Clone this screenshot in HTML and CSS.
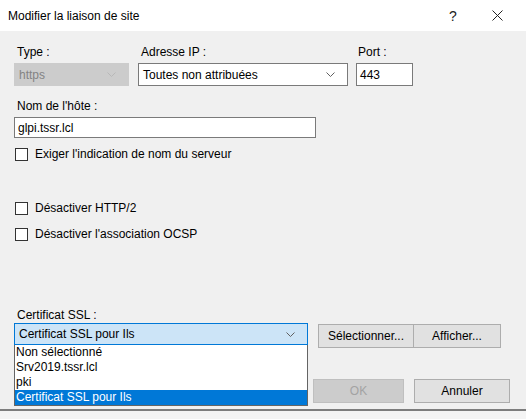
FILE: index.html
```html
<!DOCTYPE html>
<html lang="fr">
<head>
<meta charset="utf-8">
<title>Modifier la liaison de site</title>
<link rel="stylesheet" href="styles.css">
</head>
<body>
<div class="dialog">
  <div class="titlebar">
    <span class="title">Modifier la liaison de site</span>
    <span class="help">?</span>
    <span class="close">
      <svg width="11" height="11" viewBox="0 0 11 11"><path d="M0.5 0.5 L10.5 10.5 M10.5 0.5 L0.5 10.5" stroke="#222" stroke-width="1" fill="none"/></svg>
    </span>
  </div>
  <div class="content">
    <div class="row-top">
      <div class="field f-type">
        <label class="lbl">Type :</label>
        <div class="combo disabled"><span class="val">https</span><svg class="chev" width="9" height="5" viewBox="0 0 9 5"><path d="M0.5 0.5 L4.5 4.5 L8.5 0.5" stroke="#b8b8b8" fill="none"/></svg></div>
      </div>
      <div class="field f-ip">
        <label class="lbl">Adresse IP :</label>
        <div class="combo"><span class="val">Toutes non attribuées</span><svg class="chev" width="9" height="5" viewBox="0 0 9 5"><path d="M0.5 0.5 L4.5 4.5 L8.5 0.5" stroke="#606060" fill="none"/></svg></div>
      </div>
      <div class="field f-port">
        <label class="lbl">Port :</label>
        <div class="textbox port">443</div>
      </div>
    </div>

    <label class="lbl host-lbl">Nom de l'hôte :</label>
    <div class="textbox host">glpi.tssr.lcl</div>

    <div class="check c1"><span class="box"></span><span>Exiger l'indication de nom du serveur</span></div>
    <div class="check c2"><span class="box"></span><span>Désactiver HTTP/2</span></div>
    <div class="check c3"><span class="box"></span><span>Désactiver l'association OCSP</span></div>

    <label class="lbl cert-lbl">Certificat SSL :</label>
    <div class="cert-row">
      <div class="cert-wrap">
        <div class="combo focused"><span class="val">Certificat SSL pour Ils</span><svg class="chev" width="9" height="5" viewBox="0 0 9 5"><path d="M0.5 0.5 L4.5 4.5 L8.5 0.5" stroke="#606060" fill="none"/></svg></div>
        <ul class="dropdown">
          <li>Non sélectionné</li>
          <li>Srv2019.tssr.lcl</li>
          <li>pki</li>
          <li class="sel">Certificat SSL pour Ils</li>
        </ul>
      </div>
      <div class="btn b-sel">Sélectionner...</div>
      <div class="btn b-aff">Afficher...</div>
    </div>

    <div class="actions">
      <div class="btn b-ok disabled">OK</div>
      <div class="btn b-cancel">Annuler</div>
    </div>
  </div>
</div>
</body>
</html>
```

FILE: styles.css
```css
* { box-sizing: border-box; }
html, body {
  margin: 0;
  padding: 0;
}
body {
  width: 526px;
  height: 419px;
  overflow: hidden;
  background: #f4f4f4;
  font-family: "Liberation Sans", Arial, sans-serif;
  font-size: 12px;
  color: #000;
}
.dialog {
  height: 411px;
  display: flex;
  flex-direction: column;
  background: #f0f0f0;
  border-bottom: 2px solid #7d7d7d;
}
.titlebar {
  height: 31px;
  background: #fff;
  display: flex;
  align-items: center;
  padding-left: 8px;
}
.title {
  flex: 1;
  font-size: 12px;
  color: #000;
}
.help {
  width: 14px;
  font-size: 14px;
  margin-right: 29px;
  color: #222;
}
.close {
  width: 11px;
  height: 11px;
  margin-right: 23px;
  display: flex;
}
.content {
  flex: 1;
  padding: 13px 19px 0 14px;
  position: relative;
}
.lbl {
  display: block;
  line-height: 16px;
  height: 16px;
  padding-left: 3px;
}
.row-top {
  display: flex;
  gap: 9px;
}
.field .lbl { margin-bottom: 3px; }
.f-type { width: 115px; }
.f-ip { width: 210px; }
.f-port { width: 57px; margin-left: -1px; }
.f-port .lbl { padding-left: 2px; }

.combo {
  height: 23px;
  border: 1px solid #7a7a7a;
  background: #fff;
  display: flex;
  align-items: center;
  padding: 0 12px 0 4px;
}
.combo .val { flex: 1; white-space: nowrap; }
.combo.disabled {
  background: #cccccc;
  border-color: #cccccc;
  color: #838383;
}
.combo.focused {
  background: #cce4f7;
  border-color: #0078d7;
}
.textbox {
  height: 23px;
  border: 1px solid #7a7a7a;
  background: #fff;
  display: flex;
  align-items: center;
  padding-left: 3px;
}
.host-lbl { margin-top: 12px; }
.textbox.host {
  width: 302px;
  height: 21px;
  margin-top: 3px;
}
.check {
  display: flex;
  align-items: center;
  height: 16px;
  gap: 7px;
}
.check .box {
  width: 13px;
  height: 13px;
  border: 1px solid #333;
  background: #fff;
  margin-left: 1px;
}
.c1 { margin-top: 8px; }
.c2 { margin-top: 38px; }
.c3 { margin-top: 10px; }
.cert-lbl { margin-top: 65px; }
.cert-row {
  display: flex;
  align-items: flex-start;
}
.cert-wrap {
  width: 294px;
  position: relative;
  margin-right: 10px;
  z-index: 2;
}
.cert-wrap .combo { height: 22px; }
.dropdown {
  position: absolute;
  top: 22px;
  left: 0;
  width: 294px;
  margin: 0;
  padding: 0;
  list-style: none;
  background: #fff;
  border: 1px solid #646464;
  border-top: none;
}
.dropdown li {
  height: 15px;
  line-height: 15px;
  padding-left: 1px;
  white-space: nowrap;
}
.dropdown li.sel {
  background: #0078d7;
  color: #fff;
}
.btn {
  height: 24px;
  border: 1px solid #adadad;
  background: #e1e1e1;
  display: flex;
  align-items: center;
  justify-content: center;
}
.b-sel { width: 96px; margin-top: 1px; }
.b-aff { width: 87px; margin-top: 1px; border-left: none; }
.actions {
  display: flex;
  justify-content: flex-end;
  gap: 10px;
  margin-top: 31px;
}
.b-ok { width: 91px; }
.b-cancel { width: 96px; margin-right: -3px; }
.btn.disabled {
  background: #cccccc;
  border-color: #bfbfbf;
  color: #a3a3a3;
}
```
